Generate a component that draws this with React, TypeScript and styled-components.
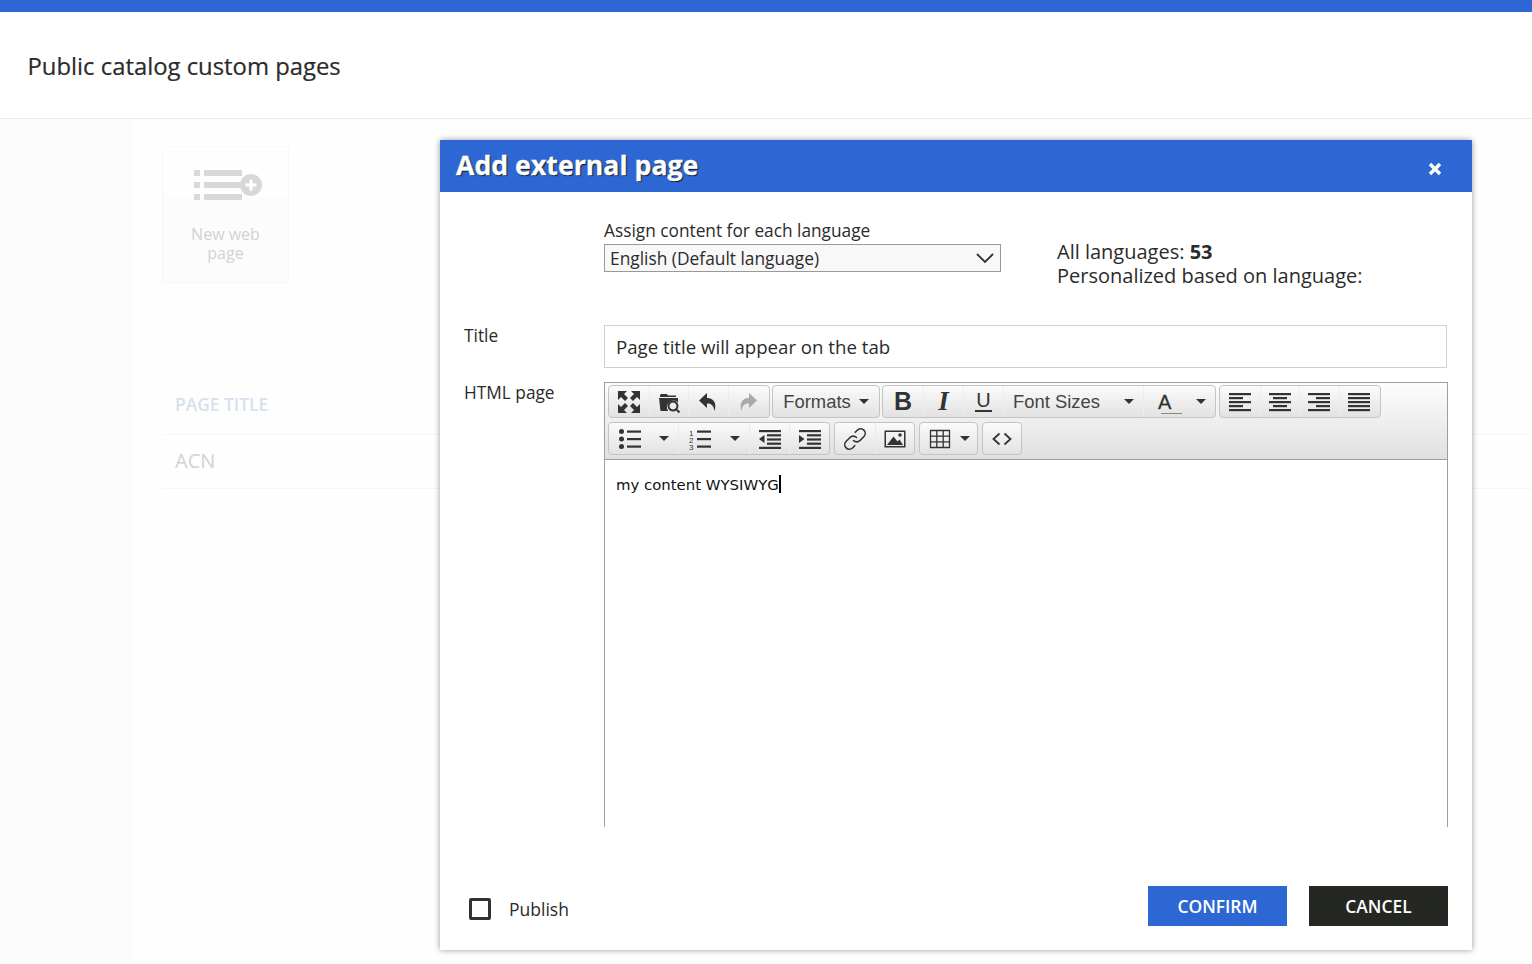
import React from 'react';
import styled, { createGlobalStyle } from 'styled-components';

const GlobalStyle = createGlobalStyle`
  html, body {
    margin: 0;
    padding: 0;
    background: #ffffff;
    font-family: 'Open Sans', 'Liberation Sans', sans-serif;
    overflow: hidden;
  }
  * { box-sizing: border-box; }
`;

const Page = styled.div`
  position: relative;
  width: 1532px;
  height: 964px;
  display: flex;
  flex-direction: column;
`;

const TopBar = styled.div`
  height: 12px;
  background: #2d67d3;
`;

const Header = styled.header`
  height: 107px;
  flex-shrink: 0;
  padding: 1px 27px 0 27.500px;
  display: flex;
  align-items: center;
  border-bottom: 1px solid #e9e9e9;
  background: #fff;
`;

const PageTitle = styled.h1`
  margin: 0;
  font-size: 23.850px;
  font-weight: 400;
  color: #2b2b2b;
  -webkit-text-stroke: 0.2px #2b2b2b;
`;

const Content = styled.div`
  flex: 1;
  display: flex;
`;

const Sidebar = styled.aside`
  width: 134px;
  background: #fcfcfc;
`;

const Main = styled.main`
  flex: 1;
  padding: 27px 0 0 28px;
  background: #fefefe;
`;

const NewCard = styled.div`
  width: 127px;
  height: 137px;
  padding-top: 22px;
  border: 1px solid #f8f8f8;
  background: linear-gradient(#fefefe 36%, #fcfcfc 36%);
  display: flex;
  flex-direction: column;
  align-items: center;
  text-align: center;
  font-size: 16px;
  line-height: 19px;
  color: #d2d2d2;
`;

const CardIcon = styled.svg`
  width: 68px;
  height: 32px;
  margin-left: 5px;
  fill: #d8d8d8;
`;

const CardLabel = styled.div`
  margin-top: 24px;
  width: 90px;
`;

const Table = styled.div`
  margin-top: 103px;
`;

const HeadCell = styled.div`
  height: 49px;
  padding: 6px 0 0 13px;
  border-bottom: 1px solid #f6f6f6;
  font-size: 17.400px;
  font-weight: 600;
  line-height: 24px;
  color: #d6e1f0;
`;

const RowCell = styled.div`
  height: 54px;
  padding: 0 0 2px 13px;
  display: flex;
  align-items: center;
  border-bottom: 1px solid #f6f6f6;
  font-size: 20px;
  color: #d2d2d2;
`;

const Modal = styled.section`
  position: absolute;
  left: 440px;
  top: 140px;
  width: 1032px;
  height: 810px;
  background: #fff;
  box-shadow: 0 0 6px rgba(0, 0, 0, 0.4);
  display: flex;
  flex-direction: column;
`;

const ModalHeader = styled.div`
  height: 52px;
  flex-shrink: 0;
  padding: 0 30px 4px 16px;
  background: #2d67d3;
  display: flex;
  align-items: center;
  justify-content: space-between;
`;

const ModalTitle = styled.h2`
  margin: 0;
  font-size: 26.700px;
  font-weight: 700;
  color: #fff;
  -webkit-text-stroke: 0.3px #fff;
  text-shadow: 1px 1px 1px #111;
`;

const CloseIcon = styled.svg`
  width: 14px;
  height: 14px;
  margin-top: 9px;
`;

const ModalBody = styled.div`
  padding: 28px 24px 0;
  flex: 1;
  color: #2b2b2b;
`;

const LanguageRow = styled.div`
  margin-left: 140px;
  display: flex;
  height: 52px;
`;

const LanguageField = styled.div`
  width: 397px;
`;

const FieldCaption = styled.div`
  font-size: 17.300px;
  line-height: 22px;
  height: 24px;
`;

const SelectBox = styled.div`
  height: 28px;
  padding: 0 5px 0 5px;
  background: #f8f8f8;
  border: 1px solid #999;
  display: flex;
  align-items: center;
  justify-content: space-between;
  font-size: 17.350px;
`;

const Stats = styled.div`
  margin: 20px 0 0 56px;
  font-size: 20px;
  line-height: 24px;

  b { font-weight: 700; }
`;

const FormRow = styled.div<{ $top: number }>`
  margin-top: ${(p) => p.$top}px;
  display: flex;
`;

const RowLabel = styled.div`
  width: 140px;
  flex-shrink: 0;
  font-size: 17.300px;
  line-height: 22px;
`;

const TextInput = styled.div`
  width: 843px;
  height: 43px;
  padding-left: 11px;
  border: 1px solid #d0d0d0;
  display: flex;
  align-items: center;
  font-size: 18.650px;
  color: #2b2b2b;
`;

const Editor = styled.div`
  width: 844px;
  height: 445px;
  border: 1px solid #9e9e9e;
  border-bottom: none;
  display: flex;
  flex-direction: column;
`;

const Toolbar = styled.div`
  height: 77px;
  flex-shrink: 0;
  padding: 2px 3px 0;
  border-bottom: 1px solid #9e9e9e;
  background: linear-gradient(#fdfdfd, #e0e0e0);
  display: flex;
  flex-direction: column;
  gap: 4px;
`;

const ToolRow = styled.div<{ $gap: number }>`
  height: 33px;
  display: flex;
  gap: ${(p) => p.$gap}px;
`;

const ToolGroup = styled.div<{ $push?: number; $tail?: number }>`
  display: flex;
  margin-left: ${(p) => p.$push ?? 0}px;
  padding-right: ${(p) => p.$tail ?? 0}px;
  border: 1px solid #c4c4c4;
  border-radius: 4px;
  background: linear-gradient(#fbfbfb, #e2e2e2);
`;

const ToolButton = styled.div<{ $w?: number }>`
  width: ${(p) => p.$w ?? 40}px;
  display: flex;
  align-items: center;
  justify-content: center;
  gap: 8px;
  border-left: 1px solid #ececec;
  color: #333;

  &:first-child { border-left: none; }
`;

const ToolText = styled.span`
  font-family: 'Liberation Sans', Arial, sans-serif;
  font-size: 18.400px;
  line-height: 24px;
  padding-top: 1px;
  color: #444;
`;

const SpacedRow = styled.div`
  width: 100%;
  padding: 0 9px;
  display: flex;
  align-items: center;
  justify-content: space-between;
`;

const Caret = styled.span`
  width: 0;
  height: 0;
  border-left: 5px solid transparent;
  border-right: 5px solid transparent;
  border-top: 5px solid #333;
`;

const BoldGlyph = styled.span`
  font-family: 'Liberation Sans', Arial, sans-serif;
  font-weight: 700;
  font-size: 25px;
  color: #333;
`;

const ItalicGlyph = styled.span`
  font-family: 'Liberation Serif', serif;
  font-style: italic;
  font-weight: 700;
  font-size: 27px;
  color: #333;
`;

const UnderGlyph = styled.span`
  font-family: 'Liberation Sans', Arial, sans-serif;
  font-size: 20px;
  line-height: 19px;
  padding: 0 1px;
  color: #333;
  border-bottom: 2px solid #333;
`;

const ColorGlyph = styled.span`
  position: relative;
  width: 30px;
  padding-left: 5px;
  font-family: 'Liberation Sans', Arial, sans-serif;
  font-size: 20px;
  line-height: 20px;
  color: #333;
  -webkit-text-stroke: 0.3px #333;

  &::after {
    content: '';
    position: absolute;
    left: 8px;
    width: 21px;
    bottom: -2px;
    height: 1px;
    background: #888;
  }
`;

const EditArea = styled.div`
  flex: 1;
  padding: 15px 11px;
  font-family: 'DejaVu Sans', Verdana, sans-serif;
  font-size: 14.900px;
  line-height: 20px;
  color: #111;
`;

const Cursor = styled.span`
  display: inline-block;
  width: 2px;
  height: 18px;
  vertical-align: -3px;
  background: #000;
`;

const Footer = styled.div`
  margin-top: 59px;
  padding-left: 5px;
  display: flex;
  align-items: flex-start;
  justify-content: space-between;
`;

const PublishLabel = styled.div`
  margin-top: 12px;
  display: flex;
  align-items: center;
  gap: 18px;
  font-size: 17.500px;
  line-height: 22px;
`;

const CheckBox = styled.span`
  width: 22px;
  height: 22px;
  border: 3px solid #333;
  border-radius: 2px;
`;

const Actions = styled.div`
  display: flex;
  gap: 22px;
`;

const ActionButton = styled.button<{ $dark?: boolean }>`
  width: 139px;
  height: 40px;
  border: none;
  padding: 0;
  background: ${(p) => (p.$dark ? '#252822' : '#2d67d3')};
  color: #fff;
  font-family: inherit;
  font-size: 17.400px;
  font-weight: 600;
`;

const Icon = ({ children, size = 24, color = '#333' }: { children: React.ReactNode; size?: number; color?: string }) => (
  <svg width={size} height={size} viewBox="0 0 24 24" fill={color} stroke="none">
    {children}
  </svg>
);

const lines = (rows: [number, number, number][]) =>
  rows.map(([x, y, w], i) => <rect key={i} x={x} y={y} width={w} height={2.2} />);

const alignIcon = (rows: [number, number][]) =>
  lines(rows.map(([x, w], i) => [x, 3 + i * 4, w] as [number, number, number]));

const Toolbar1 = () => (
  <ToolRow $gap={2}>
    <ToolGroup $tail={2}>
      <ToolButton $w={39.5}>
        <Icon>
          <path d="M1 1h9L7 4l4 4-3 3-4-4-3 3zM23 1v9l-3-3-4 4-3-3 4-4-3-3zM1 23v-9l3 3 4-4 3 3-4 4 3 3zM23 23h-9l3-3-4-4 3-3 4 4 3-3z" />
        </Icon>
      </ToolButton>
      <ToolButton $w={39.5}>
        <Icon>
          <path d="M4 4h6l1 1.500h8V7H3V5zM2 8h19v4.500a6.500 6.500 0 0 0-9.800 8.500H3.500z" />
          <path
            d="M16 11.500a4.500 4.500 0 1 0 .01 0zM19.300 19.300l3.200 3.200"
            fill="none"
            stroke="#333"
            strokeWidth="2"
          />
        </Icon>
      </ToolButton>
      <ToolButton $w={39.5}>
        <Icon>
          <path d="M11 3 3 10.500 11 18v-4.500c4 0 6.500 1.500 7.500 7.500 2.500-8-.5-12.500-7.500-13z" />
        </Icon>
      </ToolButton>
      <ToolButton $w={39.5}>
        <Icon color="#aaa">
          <path d="M13 3l8 7.500L13 18v-4.500c-4 0-6.500 1.500-7.500 7.500-2.500-8 .5-12.500 7.500-13z" />
        </Icon>
      </ToolButton>
    </ToolGroup>
    <ToolGroup>
      <ToolButton $w={106}>
        <ToolText>Formats</ToolText>
        <Caret />
      </ToolButton>
    </ToolGroup>
    <ToolGroup>
      <ToolButton>
        <BoldGlyph>B</BoldGlyph>
      </ToolButton>
      <ToolButton>
        <ItalicGlyph>I</ItalicGlyph>
      </ToolButton>
      <ToolButton>
        <UnderGlyph>U</UnderGlyph>
      </ToolButton>
      <ToolButton $w={140}>
        <SpacedRow>
          <ToolText>Font Sizes</ToolText>
          <Caret />
        </SpacedRow>
      </ToolButton>
      <ToolButton $w={72}>
        <SpacedRow>
          <ColorGlyph>A</ColorGlyph>
          <Caret />
        </SpacedRow>
      </ToolButton>
    </ToolGroup>
    <ToolGroup $push={1} $tail={2}>
      <ToolButton $w={39.5}>
        <Icon>{alignIcon([[1, 22], [1, 14], [1, 22], [1, 14], [1, 22]])}</Icon>
      </ToolButton>
      <ToolButton $w={39.5}>
        <Icon>{alignIcon([[1, 22], [5, 14], [1, 22], [5, 14], [1, 22]])}</Icon>
      </ToolButton>
      <ToolButton $w={39.5}>
        <Icon>{alignIcon([[1, 22], [9, 14], [1, 22], [9, 14], [1, 22]])}</Icon>
      </ToolButton>
      <ToolButton $w={39.5}>
        <Icon>{alignIcon([[1, 22], [1, 22], [1, 22], [1, 22], [1, 22]])}</Icon>
      </ToolButton>
    </ToolGroup>
  </ToolRow>
);

const Toolbar2 = () => (
  <ToolRow $gap={4}>
    <ToolGroup>
      <ToolButton $w={69}>
        <SpacedRow>
          <Icon>
            <circle cx="3.500" cy="4.500" r="2.500" />
            <circle cx="3.500" cy="12" r="2.500" />
            <circle cx="3.500" cy="19.500" r="2.500" />
            <rect x="9" y="3.500" width="14" height="2.200" />
            <rect x="9" y="11" width="14" height="2.200" />
            <rect x="9" y="18.500" width="14" height="2.200" />
          </Icon>
          <Caret />
        </SpacedRow>
      </ToolButton>
      <ToolButton $w={71}>
        <SpacedRow>
          <Icon>
            <text x="1" y="8.500" fontSize="8" fontFamily="Liberation Sans">1</text>
            <text x="1" y="15.500" fontSize="8" fontFamily="Liberation Sans">2</text>
            <text x="1" y="22.500" fontSize="8" fontFamily="Liberation Sans">3</text>
            <rect x="9" y="3.500" width="14" height="2.200" />
            <rect x="9" y="11" width="14" height="2.200" />
            <rect x="9" y="18.500" width="14" height="2.200" />
          </Icon>
          <Caret />
        </SpacedRow>
      </ToolButton>
      <ToolButton>
        <Icon>
          {lines([[1, 3, 22], [9, 7.2, 14], [9, 11.4, 14], [9, 15.6, 14], [1, 19.8, 22]])}
          <path d="M6.500 8v8L1 12z" />
        </Icon>
      </ToolButton>
      <ToolButton>
        <Icon>
          {lines([[1, 3, 22], [9, 7.2, 14], [9, 11.4, 14], [9, 15.6, 14], [1, 19.8, 22]])}
          <path d="M1 8v8l5.500-4z" />
        </Icon>
      </ToolButton>
    </ToolGroup>
    <ToolGroup>
      <ToolButton>
        <Icon>
          <g fill="none" stroke="#333" strokeWidth="1.600" strokeLinecap="round">
            <path d="M10.500 13.500a4.500 4.500 0 0 0 6.500 0l4-4a4.600 4.600 0 0 0-6.500-6.500l-2.300 2.300" />
            <path d="M13.500 10.500a4.500 4.500 0 0 0-6.500 0l-4 4a4.600 4.600 0 0 0 6.500 6.500l2.300-2.300" />
          </g>
        </Icon>
      </ToolButton>
      <ToolButton $w={39}>
        <Icon>
          <path d="M1.500 3.500h21v17h-21zM3 5v14h18V5z" fillRule="evenodd" />
          <path d="M4 18l6.500-8.500 4 5 2-2 3.500 5.500z" />
          <circle cx="17" cy="8" r="1.800" />
        </Icon>
      </ToolButton>
    </ToolGroup>
    <ToolGroup>
      <ToolButton $w={57}>
        <Icon>
          <path
            d="M2.500 3.500h19v17h-19zM2.500 9.200h19M2.500 14.800h19M8.800 3.500v17M15.200 3.500v17"
            fill="none"
            stroke="#333"
            strokeWidth="1.300"
          />
        </Icon>
        <Caret />
      </ToolButton>
    </ToolGroup>
    <ToolGroup>
      <ToolButton $w={38}>
        <Icon>
          <path d="M9.500 6.500 3.500 12l6 5.500M14.500 6.500l6 5.500-6 5.500" fill="none" stroke="#333" strokeWidth="1.800" />
        </Icon>
      </ToolButton>
    </ToolGroup>
  </ToolRow>
);

export default function App() {
  return (
    <Page>
      <GlobalStyle />
      <TopBar />
      <Header>
        <PageTitle>Public catalog custom pages</PageTitle>
      </Header>
      <Content>
        <Sidebar />
        <Main>
          <NewCard>
            <CardIcon viewBox="0 0 68 32">
              <rect x="0" y="1" width="6" height="6" />
              <rect x="0" y="13" width="6" height="6" />
              <rect x="0" y="25" width="6" height="6" />
              <rect x="10" y="1" width="38" height="6" />
              <rect x="10" y="13" width="38" height="6" />
              <rect x="10" y="25" width="38" height="6" />
              <circle cx="57" cy="16" r="11" />
              <path d="M55.500 10.500h3v4h4v3h-4v4h-3v-4h-4v-3h4z" fill="#fff" />
            </CardIcon>
            <CardLabel>New web page</CardLabel>
          </NewCard>
          <Table>
            <HeadCell>PAGE TITLE</HeadCell>
            <RowCell>ACN</RowCell>
          </Table>
        </Main>
      </Content>

      <Modal>
        <ModalHeader>
          <ModalTitle>Add external page</ModalTitle>
          <CloseIcon viewBox="0 0 14 14">
            <path d="M2 2l10 10M12 2 2 12" stroke="#fff" strokeWidth="3.400" />
          </CloseIcon>
        </ModalHeader>
        <ModalBody>
          <LanguageRow>
            <LanguageField>
              <FieldCaption>Assign content for each language</FieldCaption>
              <SelectBox>
                English (Default language)
                <svg width="20" height="12" viewBox="0 0 20 12">
                  <path d="M2 2l8 8 8-8" fill="none" stroke="#333" strokeWidth="1.800" />
                </svg>
              </SelectBox>
            </LanguageField>
            <Stats>
              All languages: <b>53</b>
              <br />
              Personalized based on language:
            </Stats>
          </LanguageRow>
          <FormRow $top={53}>
            <RowLabel>Title</RowLabel>
            <TextInput>Page title will appear on the tab</TextInput>
          </FormRow>
          <FormRow $top={14}>
            <RowLabel>HTML page</RowLabel>
            <Editor>
              <Toolbar>
                <Toolbar1 />
                <Toolbar2 />
              </Toolbar>
              <EditArea>
                my content WYSIWYG
                <Cursor />
              </EditArea>
            </Editor>
          </FormRow>
          <Footer>
            <PublishLabel>
              <CheckBox />
              Publish
            </PublishLabel>
            <Actions>
              <ActionButton>CONFIRM</ActionButton>
              <ActionButton $dark>CANCEL</ActionButton>
            </Actions>
          </Footer>
        </ModalBody>
      </Modal>
    </Page>
  );
}
